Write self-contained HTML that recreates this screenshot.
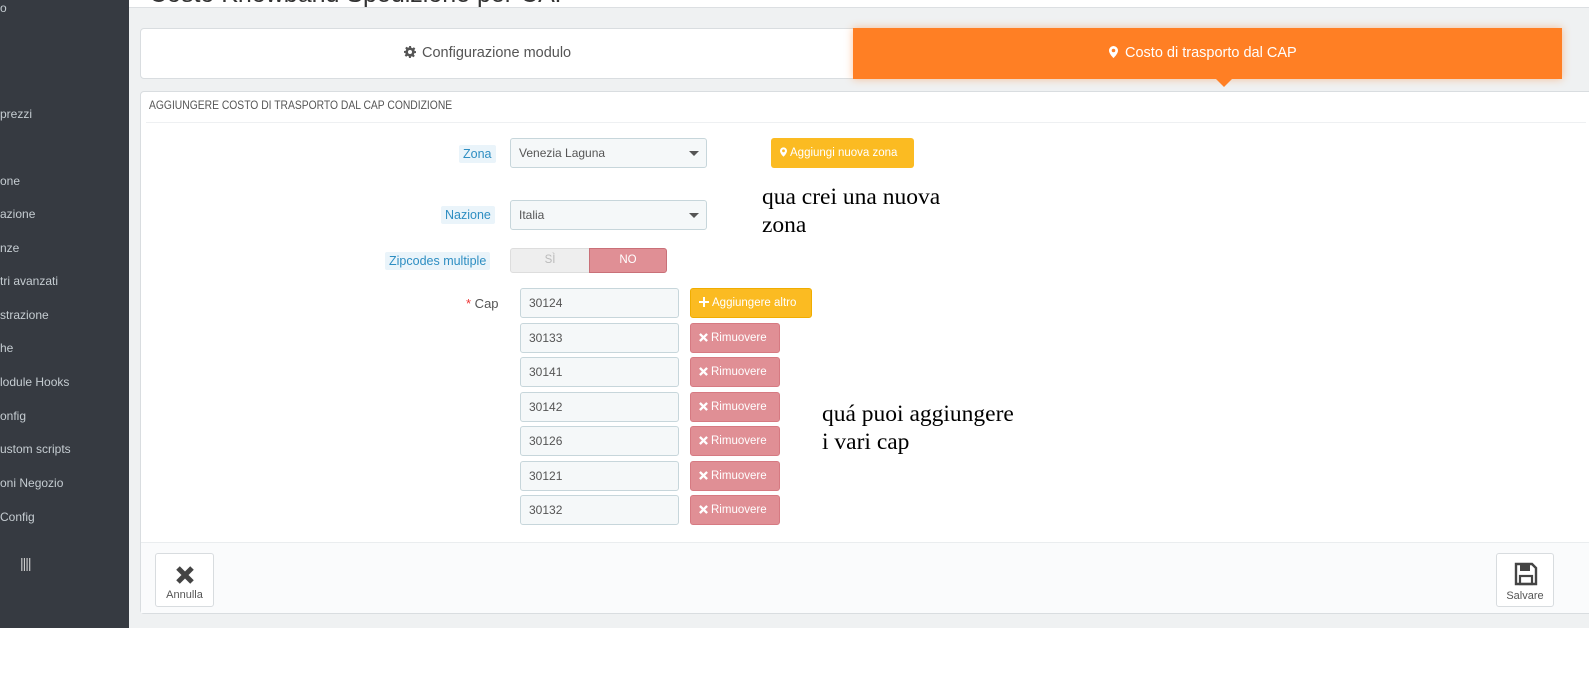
<!DOCTYPE html>
<html><head><meta charset="utf-8">
<style>
*{box-sizing:border-box;margin:0;padding:0}
body{width:1589px;height:689px;background:#fff;font-family:"Liberation Sans",sans-serif;position:relative;overflow:hidden}
.a{position:absolute}
#side{left:0;top:0;width:129px;height:628px;background:#363a41}
#side div{position:absolute;left:0;font-size:12px;color:#c5ccd1;white-space:nowrap}
#main{left:129px;top:0;width:1460px;height:628px;background:#eff1f2}
.lbl{position:absolute;font-size:12.5px;color:#2e8ec2;background:#eaf4fa;padding:2px 4px;border-radius:2px}
.sel{position:absolute;background:#f5f8f9;border:1px solid #c7d6db;border-radius:3px;font-size:12px;color:#555;padding-left:8px}
.sel:after{content:"";position:absolute;right:7px;top:12px;border:5px solid transparent;border-top:5px solid #555;border-bottom:0}
.inp{position:absolute;left:520px;width:159px;height:30px;background:#f5f8f9;border:1px solid #c7d6db;border-radius:3px;font-size:12px;color:#555;padding:7px 8px;line-height:14px}
.rm{position:absolute;left:690px;width:90px;height:30px;background:#e08f95;border:1px solid #d67a82;border-radius:3px;color:#fff;font-size:11.5px;line-height:28px;padding-left:8px;white-space:nowrap}
.rm svg{vertical-align:-1px;margin-right:3px}
.note{position:absolute;font-family:"Liberation Serif",serif;font-size:23.5px;line-height:28px;color:#000;white-space:nowrap}
.fb{position:absolute;top:553px;height:54px;background:#fff;border:1px solid #d8dcdf;border-radius:3px;font-size:11px;color:#555;text-align:center}
</style></head><body>
<div id="side" class="a">
<div style="top:1px">o</div>
<div style="top:107px">prezzi</div>
<div style="top:174px">one</div>
<div style="top:207px">azione</div>
<div style="top:241px">nze</div>
<div style="top:274px">tri avanzati</div>
<div style="top:308px">strazione</div>
<div style="top:341px">he</div>
<div style="top:375px">lodule Hooks</div>
<div style="top:409px">onfig</div>
<div style="top:442px">ustom scripts</div>
<div style="top:476px">oni Negozio</div>
<div style="top:510px">Config</div>
<div style="top:555px;left:20px;font-size:14px;letter-spacing:-1px;color:#ccc">||||</div>
</div>
<div id="main" class="a">
<div class="a" style="left:0;top:0;width:1460px;height:8px;background:#fff;border-bottom:1px solid #dcdfe2"></div>
<div class="a" style="left:20px;top:-19px;font-size:25px;color:#333;white-space:nowrap;height:27px;overflow:hidden;line-height:27px">Costo Knowband Spedizione per CAP</div>
</div>
<div class="a" style="left:140px;top:28px;width:1422px;height:51px;background:#fff;border:1px solid #d9dde0;border-radius:4px"></div>
<div class="a" style="left:404px;top:45px;font-size:14.5px;color:#555;white-space:nowrap"><svg width="12" height="12" viewBox="0 0 12 12" style="vertical-align:-1px;margin-right:6px"><path fill="#555" d="M5 0h2l.3 1.7 1.2.5 1.4-1 1.4 1.4-1 1.4.5 1.2L12 5v2l-1.7.3-.5 1.2 1 1.4-1.4 1.4-1.4-1-1.2.5L7 12H5l-.3-1.7-1.2-.5-1.4 1-1.4-1.4 1-1.4-.5-1.2L0 7V5l1.7-.3.5-1.2-1-1.4 1.4-1.4 1.4 1 1.2-.5z"/><circle cx="6" cy="6" r="2" fill="#fff"/></svg>Configurazione modulo</div>
<div class="a" style="left:853px;top:28px;width:709px;height:51px;background:#ff7f24;box-shadow:0 0 8px rgba(255,127,36,.45)"></div>
<div class="a" style="left:1216px;top:79px;border:8px solid transparent;border-top:8px solid #ff7f24;border-bottom:0"></div>
<div class="a" style="left:1109px;top:45px;font-size:14.5px;color:#fff;white-space:nowrap"><svg width="9" height="12" viewBox="0 0 9 12" style="vertical-align:-1px;margin-right:7px"><path fill="#fff" d="M4.5 0A4.5 4.5 0 0 0 0 4.5C0 8 4.5 12 4.5 12S9 8 9 4.5A4.5 4.5 0 0 0 4.5 0zm0 6.3a1.8 1.8 0 1 1 0-3.6 1.8 1.8 0 0 1 0 3.6z"/></svg>Costo di trasporto dal CAP</div>
<div class="a" style="left:140px;top:91px;width:1460px;height:523px;background:#fff;border:1px solid #d9dde0;border-radius:4px"></div>
<div class="a" style="left:149px;top:98px;font-size:12px;color:#555;white-space:nowrap;transform:scaleX(.86);transform-origin:left;line-height:14px">AGGIUNGERE COSTO DI TRASPORTO DAL CAP CONDIZIONE</div>
<div class="a" style="left:146px;top:122px;width:1440px;height:1px;background:#eef0f2"></div>
<div class="a" style="left:141px;top:542px;width:1448px;height:71px;background:#fafbfc;border-top:1px solid #eaedef"></div>

<div class="lbl" style="left:459px;top:145px">Zona</div>
<div class="sel" style="left:510px;top:138px;width:197px;height:30px;line-height:28px">Venezia Laguna</div>
<div class="a" style="left:771px;top:138px;width:143px;height:30px;background:#fbbb22;border-radius:3px;color:#fff;font-size:11.5px;line-height:30px;padding-left:9px;white-space:nowrap"><svg width="7" height="10" viewBox="0 0 9 12" style="vertical-align:-1px;margin-right:3px"><path fill="#fff" d="M4.5 0A4.5 4.5 0 0 0 0 4.5C0 8 4.5 12 4.5 12S9 8 9 4.5A4.5 4.5 0 0 0 4.5 0zm0 6.3a1.8 1.8 0 1 1 0-3.6 1.8 1.8 0 0 1 0 3.6z"/></svg>Aggiungi nuova zona</div>
<div class="note" style="left:762px;top:183px">qua crei una nuova<br>zona</div>

<div class="lbl" style="left:441px;top:206px">Nazione</div>
<div class="sel" style="left:510px;top:200px;width:197px;height:30px;line-height:28px">Italia</div>

<div class="lbl" style="left:385px;top:252px">Zipcodes multiple</div>
<div class="a" style="left:510px;top:248px;width:80px;height:25px;background:#eee;border:1px solid #ddd;border-radius:3px 0 0 3px;color:#bbb;font-size:11.5px;text-align:center;line-height:23px">SÌ</div>
<div class="a" style="left:589px;top:248px;width:78px;height:25px;background:#e08f95;border:1px solid #c97078;border-radius:0 3px 3px 0;color:#fff;font-size:11.5px;text-align:center;line-height:23px">NO</div>

<div class="a" style="left:466px;top:296px;font-size:13px;color:#555;white-space:nowrap"><span style="color:#e33">*</span> Cap</div>
<div class="inp" style="top:288px">30124</div>
<div class="a" style="left:690px;top:288px;width:122px;height:30px;background:#fbbb22;border:1px solid #f0ad00;border-radius:3px;color:#fff;font-size:11.5px;line-height:28px;padding-left:8px;white-space:nowrap"><svg width="10" height="10" viewBox="0 0 10 10" style="vertical-align:-1px;margin-right:3px"><path fill="#fff" d="M4 0h2v4h4v2H6v4H4V6H0V4h4z"/></svg>Aggiungere altro</div>

<div class="inp" style="top:323px">30133</div>
<div class="inp" style="top:357px">30141</div>
<div class="inp" style="top:392px">30142</div>
<div class="inp" style="top:426px">30126</div>
<div class="inp" style="top:461px">30121</div>
<div class="inp" style="top:495px">30132</div>
<div class="rm" style="top:323px"><svg width="9" height="9" viewBox="0 0 10 10"><path stroke="#fff" stroke-width="2.6" d="M1 1l8 8M9 1l-8 8"/></svg>Rimuovere</div>
<div class="rm" style="top:357px"><svg width="9" height="9" viewBox="0 0 10 10"><path stroke="#fff" stroke-width="2.6" d="M1 1l8 8M9 1l-8 8"/></svg>Rimuovere</div>
<div class="rm" style="top:392px"><svg width="9" height="9" viewBox="0 0 10 10"><path stroke="#fff" stroke-width="2.6" d="M1 1l8 8M9 1l-8 8"/></svg>Rimuovere</div>
<div class="rm" style="top:426px"><svg width="9" height="9" viewBox="0 0 10 10"><path stroke="#fff" stroke-width="2.6" d="M1 1l8 8M9 1l-8 8"/></svg>Rimuovere</div>
<div class="rm" style="top:461px"><svg width="9" height="9" viewBox="0 0 10 10"><path stroke="#fff" stroke-width="2.6" d="M1 1l8 8M9 1l-8 8"/></svg>Rimuovere</div>
<div class="rm" style="top:495px"><svg width="9" height="9" viewBox="0 0 10 10"><path stroke="#fff" stroke-width="2.6" d="M1 1l8 8M9 1l-8 8"/></svg>Rimuovere</div>
<div class="note" style="left:822px;top:400px">quá puoi aggiungere<br>i vari cap</div>

<div class="fb" style="left:155px;width:59px"><svg width="20" height="20" viewBox="0 0 20 20" style="margin-top:11px;display:block;margin-left:19px"><path stroke="#444" stroke-width="5" d="M3 3l14 14M17 3L3 17"/></svg><div style="margin-top:4px">Annulla</div></div>
<div class="fb" style="left:1496px;width:58px"><svg width="24" height="24" viewBox="0 0 24 24" style="margin-top:8px;display:block;margin-left:17px"><path fill="none" stroke="#444" stroke-width="2.4" d="M2 2h16l4 4v16H2z"/><rect x="6" y="2" width="10" height="7" fill="#444"/><rect x="6" y="14" width="12" height="8" fill="none" stroke="#444" stroke-width="2.2"/></svg><div style="margin-top:4px">Salvare</div></div>
</body></html>
